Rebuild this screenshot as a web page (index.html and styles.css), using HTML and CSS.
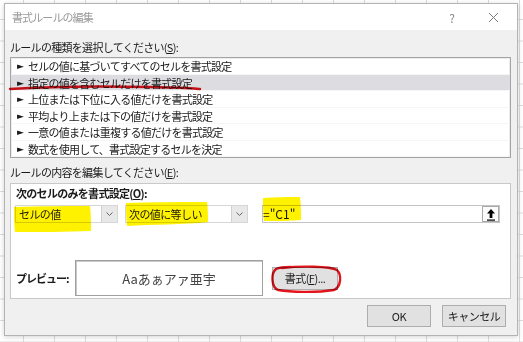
FILE: index.html
```html
<!DOCTYPE html>
<html lang="ja">
<head>
  <meta charset="UTF-8">
  <title>書式ルールの編集</title>
  <link rel="stylesheet" href="styles.css">
</head>
<body>
  <div class="dialog">
    <div class="titlebar">
      <span class="title">書式ルールの編集</span>
      <span class="help">?</span>
      <span class="close">
        <svg width="11" height="11" viewBox="0 0 11 11"><path d="M1 1 L10 10 M10 1 L1 10" stroke="#777" stroke-width="1"/></svg>
      </span>
    </div>

    <div class="content">
      <div class="label first">ルールの種類を選択してください(<u>S</u>):</div>
      <ul class="rules">
        <li><span class="arrow">►</span>セルの値に基づいてすべてのセルを書式設定</li>
        <li class="selected"><span class="arrow">►</span>指定の値を含むセルだけを書式設定</li>
        <li><span class="arrow">►</span>上位または下位に入る値だけを書式設定</li>
        <li><span class="arrow">►</span>平均より上または下の値だけを書式設定</li>
        <li><span class="arrow">►</span>一意の値または重複する値だけを書式設定</li>
        <li><span class="arrow">►</span>数式を使用して、書式設定するセルを決定</li>
      </ul>

      <div class="label second">ルールの内容を編集してください(<u>E</u>):</div>
      <div class="panel">
        <div class="panel-title">次のセルのみを書式設定(<u>O</u>):</div>
        <div class="criteria">
          <div class="combo combo-kind">
            <span class="combo-text">セルの値</span>
            <span class="drop"><svg width="7" height="4" viewBox="0 0 7 4"><path d="M0.5 0.5 L3.5 3.5 L6.5 0.5" fill="none" stroke="#666" stroke-width="1"/></svg></span>
          </div>
          <div class="combo combo-op">
            <span class="combo-text">次の値に等しい</span>
            <span class="drop"><svg width="7" height="4" viewBox="0 0 7 4"><path d="M0.5 0.5 L3.5 3.5 L6.5 0.5" fill="none" stroke="#666" stroke-width="1"/></svg></span>
          </div>
          <div class="ref">
            <span class="ref-text">="C1"</span>
            <span class="ref-btn">
              <svg width="10" height="13" viewBox="0 0 10 13"><path d="M5 1 L1 5.5 H3.6 V10 H6.4 V5.5 H9 Z" fill="#000"/><rect x="1" y="11.5" width="8" height="1.2" fill="#000"/></svg>
            </span>
          </div>
        </div>
        <div class="preview-row">
          <span class="preview-label">プレビュー:</span>
          <div class="preview">Aaあぁアァ亜宇</div>
          <button class="btn format-btn">書式(<u>F</u>)...</button>
        </div>
      </div>

      <div class="actions">
        <button class="btn">OK</button>
        <button class="btn">キャンセル</button>
      </div>
    </div>
  </div>

  <svg class="marks" width="523" height="342" viewBox="0 0 523 342">
    <path d="M14 207 C 40 206, 70 206, 90 206 C 91 214, 91 224, 91 231 C 65 232, 40 232, 15 232 C 14 224, 14 214, 14 207 Z" fill="#fff200"/>
    <path d="M126 203 C 150 202, 185 202, 207 202 C 208 209, 208 216, 208 222 C 185 225, 150 224, 127 226 C 126 218, 126 210, 126 203 Z" fill="#fff200"/>
    <path d="M263 198 C 275 197, 290 197, 300 197 C 301 205, 301 213, 301 220 C 290 221, 275 221, 264 221 C 263 213, 263 205, 263 198 Z" fill="#fff200"/>
    <path d="M10 89 C 40 87, 100 86, 150 87 S 195 89, 200 89" fill="none" stroke="#e3131b" stroke-width="2.4" stroke-linecap="round"/>
    <path d="M282 268 C 300 266, 330 266, 337 270 C 342 275, 341 287, 334 290 C 315 293, 290 292, 278 290 C 271 287, 271 273, 276 269 C 280 267, 285 267, 291 267" fill="none" stroke="#e3131b" stroke-width="2.4" stroke-linecap="round"/>
  </svg>
</body>
</html>
```

FILE: styles.css
```css
* {
  box-sizing: border-box;
}

html, body {
  height: 100%;
}

body {
  margin: 0;
  position: relative;
  overflow: hidden;
  font-family: "Noto Sans CJK JP", "Noto Sans", sans-serif;
  font-size: 11px;
  color: #1a1a1a;
  background-color: #fff;
  background-image:
    linear-gradient(to right, #dcdcdc 1px, transparent 1px),
    linear-gradient(to bottom, #dcdcdc 1px, transparent 1px);
  background-size: 31px 21.5px;
  background-position: 23px 19px;
}

.dialog {
  margin: 3px 0 0 4px;
  width: 514px;
  height: 333px;
  background: #f0f0f0;
  border: 1px solid #b4b4b4;
  box-shadow: 0 1px 5px rgba(0, 0, 0, 0.18);
  overflow: hidden;
}

.titlebar {
  height: 26px;
  background: #fff;
  display: flex;
  align-items: center;
  padding-left: 7px;
}

.title {
  flex: 1;
  color: #9a9a9a;
  font-size: 11px;
  letter-spacing: -0.9px;
}

.help {
  color: #888;
  font-size: 12px;
  margin-right: 33px;
}

.close {
  display: flex;
  margin-right: 18px;
}

.content {
  padding: 0 6px 0 5px;
}

.label {
  line-height: 17px;
  letter-spacing: -0.7px;
}

.label.first {
  margin-top: 9px;
  margin-bottom: 1px;
}

.label.second {
  margin-top: 6px;
  margin-bottom: 2px;
}

.rules {
  list-style: none;
  margin: 0;
  padding: 0;
  height: 101px;
  background: #fff;
  border: 1px solid #a4a4a4;
  box-shadow: inset 0 0 0 1px #ececec;
}

.rules li {
  height: 16.5px;
  line-height: 16.5px;
  padding-left: 6px;
  letter-spacing: -0.75px;
  border-bottom: 1px solid #f6f6f6;
  white-space: nowrap;
}

.rules li.selected {
  background: #dcdce1;
}

.arrow {
  display: inline-block;
  width: 11px;
  font-family: "DejaVu Sans", sans-serif;
  font-size: 9px;
  letter-spacing: 0;
  vertical-align: top;
}

.panel {
  height: 116px;
  background: #fff;
  border: 1px solid #c9c9c9;
  padding: 0 9px 0 4px;
}

.panel-title {
  margin-top: 1px;
  margin-left: 1px;
  line-height: 17px;
  font-weight: bold;
  letter-spacing: -0.7px;
}

.criteria {
  display: flex;
  margin-top: 3px;
  height: 18px;
}

.combo {
  display: flex;
  border: 1px solid #d6d6d6;
  background: #fff;
}

.combo-kind {
  width: 103px;
}

.combo-op {
  width: 123px;
  margin-left: 7px;
}

.combo-text {
  flex: 1;
  padding-left: 3px;
  line-height: 16px;
  letter-spacing: -0.6px;
}

.drop {
  width: 16px;
  display: flex;
  align-items: center;
  justify-content: center;
  background: #e8e8e8;
  border-left: 1px solid #d0d0d0;
}

.ref {
  display: flex;
  align-items: center;
  width: 238px;
  margin-left: 14px;
  border: 1px solid #c4c4c4;
}

.ref-text {
  flex: 1;
  line-height: 16px;
  font-size: 12px;
}

.ref-btn {
  width: 17px;
  height: 16px;
  display: flex;
  align-items: center;
  justify-content: center;
  border: 1px solid #a9a9a9;
  background: #fbfbfb;
}

.preview-row {
  display: flex;
  align-items: center;
  margin-top: 37px;
}

.preview-label {
  width: 59px;
  margin-left: 1px;
  font-weight: bold;
  letter-spacing: -1px;
}

.preview {
  width: 188px;
  height: 36px;
  display: flex;
  align-items: center;
  justify-content: center;
  border: 1px solid #a0a0a0;
  box-shadow: inset 1px 1px 0 #c8c8c8;
  font-size: 13px;
  color: #444;
}

.btn {
  font-family: inherit;
  font-size: 11px;
  color: #1a1a1a;
  background: #e1e1e1;
  border: 1px solid #adadad;
  padding: 0;
  letter-spacing: -0.5px;
}

.format-btn {
  width: 66px;
  height: 23px;
  margin-left: 9px;
}

.actions {
  display: flex;
  justify-content: flex-end;
  gap: 11px;
  margin-top: 6px;
  padding-right: 5px;
}

.actions .btn {
  width: 64px;
  height: 22px;
}

.marks {
  position: absolute;
  top: 0;
  left: 0;
  pointer-events: none;
  mix-blend-mode: multiply;
}
```
